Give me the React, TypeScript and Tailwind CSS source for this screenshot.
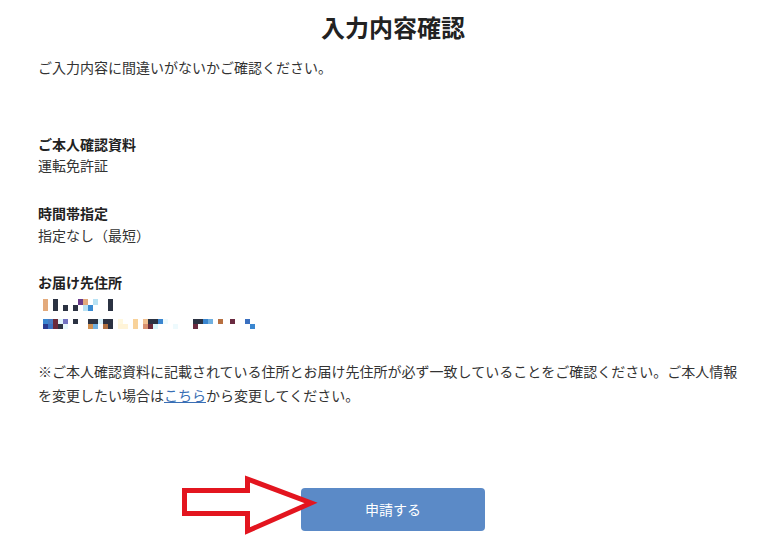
import React from "react";

const font = { fontFamily: '"Noto Sans CJK JP", "Noto Sans", sans-serif' };

type Cell = [number, number, number, string];
// x, y(0 or 1 sub-row), width, color ; row offset added separately
const row1: Cell[] = [
  [7, 0, 5, "#e3aa7c"], [7, 1, 5, "#e3aa7c"],
  [17, 0, 5, "#2b3242"], [17, 1, 5, "#2b3242"],
  [27, 1, 5, "#2b3242"],
  [37, 1, 5, "#2b3242"],
  [42, 0, 5, "#6a3a8a"], [47, 0, 5, "#e3aa7c"],
  [47, 1, 5, "#b8e2f4"], [52, 1, 5, "#3a8ad0"],
  [57, 0, 5, "#b8e2f4"],
  [72, 0, 5, "#2b3242"], [72, 1, 5, "#2b3242"],
];
const row2: Cell[] = [
  [7, 0, 5, "#3a86d0"], [12, 0, 5, "#4a7ac0"], [17, 0, 5, "#6a2a3a"], [22, 0, 5, "#dff4fb"], [27, 0, 5, "#7272c0"],
  [7, 1, 5, "#2a3a90"], [12, 1, 5, "#3a70c0"], [17, 1, 5, "#6a2a3a"], [22, 1, 5, "#2b3242"], [27, 1, 5, "#e8f8fc"],
  [37, 0, 5, "#2b3242"],
  [52, 0, 5, "#2b3242"], [57, 0, 5, "#2b3242"], [62, 0, 5, "#d8f2fa"], [67, 0, 5, "#2b3242"], [72, 0, 5, "#2b3242"],
  [52, 1, 5, "#d09050"], [57, 1, 5, "#70b0e0"], [67, 1, 5, "#b07040"], [72, 1, 5, "#2b3242"],
  [82, 0, 5, "#fff8e0"], [82, 1, 10, "#fff4d8"],
  [97, 0, 5, "#f8d29a"], [97, 1, 5, "#f8d29a"],
  [107, 0, 5, "#f0c090"], [107, 1, 5, "#d89070"],
  [112, 0, 5, "#2b3242"], [117, 0, 5, "#2b3242"], [122, 0, 5, "#3a86d0"], [127, 0, 5, "#eefafd"],
  [112, 1, 5, "#6a2a3a"], [117, 1, 5, "#d8f6fb"],
  [137, 1, 5, "#eefafd"],
  [157, 0, 5, "#2b3242"], [162, 0, 5, "#2b3242"], [167, 0, 5, "#3a86d0"], [172, 0, 5, "#70b0e0"],
  [157, 1, 5, "#6a2a40"],
  [182, 0, 5, "#b87040"], [194, 0, 5, "#6a2a40"],
  [209, 0, 5, "#3a70c0"], [214, 1, 5, "#3a86d0"],
];

function Mosaic() {
  return (
    <svg width="240" height="40" shapeRendering="crispEdges" className="block">
      {row1.map(([x, s, w, c], i) => (
        <rect key={"a" + i} x={x - 2} y={4 + s * 6} width={w} height={6} fill={c} />
      ))}
      {row2.map(([x, s, w, c], i) => (
        <rect key={"b" + i} x={x - 2} y={24 + s * 5} width={w} height={5} fill={c} />
      ))}
    </svg>
  );
}

export default function App() {
  return (
    <div className="relative w-[771px] h-[544px] bg-white text-[#333333] overflow-hidden" style={font}>
      <div className="pl-[15px]">
        <h1 className="h-[54px] leading-[54px] text-center text-[24px] font-bold text-[#222222]">入力内容確認</h1>
        <div className="px-[23px]">
          <p className="mt-[1px] text-[14px] leading-[24px]">ご入力内容に間違いがないかご確認ください。</p>

          <div className="mt-[55px] text-[14px] leading-[21px]">
            <div className="font-bold text-[#222222]">ご本人確認資料</div>
            <div>運転免許証</div>
          </div>
          <div className="mt-[27px] text-[14px] leading-[21px]">
            <div className="font-bold text-[#222222]">時間帯指定</div>
            <div className="mt-[1px]">指定なし（最短）</div>
          </div>
          <div className="mt-[26px] text-[14px] leading-[21px]">
            <div className="font-bold text-[#222222]">お届け先住所</div>
            <div className="mt-[2px]">
              <Mosaic />
            </div>
          </div>

          <p className="mt-[24px] text-[14px] leading-[24px] pr-[8px]">
            ※ご本人確認資料に記載されている住所とお届け先住所が必ず一致していることをご確認ください。ご本人情報を変更したい場合は
            <a className="text-[#3a6fb5] underline" href="#">こちら</a>
            から変更してください。
          </p>

          <div className="mt-[81px] flex justify-center -ml-[23px] -mr-[23px]">
            <button className="w-[184px] h-[43px] rounded-[4px] bg-[#5b8ac7] text-white text-[14px]">申請する</button>
          </div>
        </div>
      </div>
      <svg className="absolute left-0 top-0 pointer-events-none" width="771" height="544">
        <polygon
          points="184.5,490.5 247.5,490.5 247.5,479 311,503 247.5,531 247.5,513.5 184.5,513.5"
          fill="white"
          stroke="#e3151f"
          strokeWidth="5"
          strokeLinejoin="miter"
        />
      </svg>
    </div>
  );
}
